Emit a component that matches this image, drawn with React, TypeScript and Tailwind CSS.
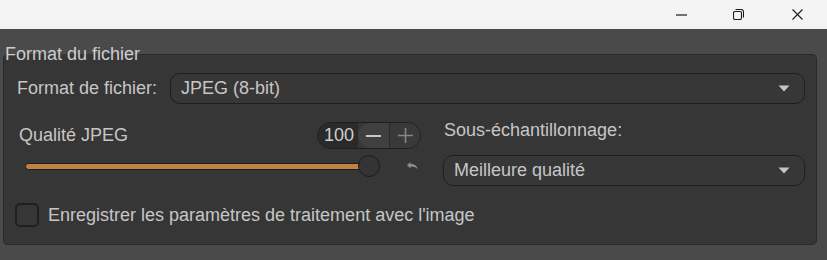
import React from "react";

function Arrow() {
  return (
    <svg width="12" height="7" viewBox="0 0 12 7">
      <path d="M0.5 0.5h11L6 6.5z" fill="#c4c4c4" />
    </svg>
  );
}

function Select({ value }: { value: string }) {
  return (
    <div className="flex h-[31px] flex-1 items-center justify-between rounded-[10px] border border-[#1f1f1f] bg-[#373737] pl-[10px] pr-[14px]">
      <span>{value}</span>
      <Arrow />
    </div>
  );
}

function TitleBar() {
  return (
    <div className="flex h-[29px] justify-end bg-[#f3f3f3]">
      <div className="flex w-[56px] items-center justify-center">
        <svg width="11" height="11" viewBox="0 0 11 11">
          <path d="M0 6h11" stroke="#1a1a1a" strokeWidth="1.2" />
        </svg>
      </div>
      <div className="flex w-[58px] items-center justify-center">
        <svg width="11" height="11" viewBox="0 0 11 11" fill="none" stroke="#1a1a1a" strokeWidth="1.1">
          <rect x="0.5" y="2.5" width="8" height="8" rx="1.5" />
          <path d="M2.5 0.5h5.5a2.5 2.5 0 0 1 2.5 2.5v5.5" />
        </svg>
      </div>
      <div className="flex w-[60px] items-center justify-center">
        <svg width="11" height="11" viewBox="0 0 11 11" stroke="#1a1a1a" strokeWidth="1.1">
          <path d="M0.5 0.5l10 10M10.5 0.5l-10 10" />
        </svg>
      </div>
    </div>
  );
}

export default function App() {
  return (
    <div className="h-[260px] w-[827px] overflow-hidden bg-[#4a4a4a] font-['Liberation_Sans',Arial,sans-serif] text-[18px] text-[#c6c6c6]">
      <TitleBar />
      <div className="pl-[3px] pr-[10px] pt-[15px]">
        <fieldset className="rounded-[5px] border border-[#2a2a2a] bg-[#363636] p-0">
          <legend className="ml-[1px] p-0 leading-[21px] text-[#cdcdcd]">Format du fichier</legend>
          <div className="pl-[13px] pr-[11px] pt-[8px] pb-[17px] leading-[21px]">
            {/* format row */}
            <div className="flex items-center">
              <div className="w-[153px]">Format de fichier:</div>
              <Select value="JPEG (8-bit)" />
            </div>

            {/* quality + subsampling */}
            <div className="mt-[16px] grid grid-cols-[404px_1fr] gap-x-[22px]">
              <div>
                <div className="flex h-[31px] items-center justify-between">
                  <span className="ml-[2px]">Qualité JPEG</span>
                  <div className="flex h-[27px] w-[104px] overflow-hidden rounded-full border border-[#1f1f1f]">
                    <div className="flex w-[40px] items-center bg-[#2a2a2a] pl-[6px] text-[#cfcfcf]">100</div>
                    <div className="flex w-[31px] items-center justify-center rounded-l-full bg-[#404040]">
                      <svg width="15" height="2" viewBox="0 0 15 2">
                        <path d="M0 1h15" stroke="#c8c8c8" strokeWidth="2" />
                      </svg>
                    </div>
                    <div className="flex flex-1 items-center justify-center border-l border-[#2a2a2a] bg-[#393939]">
                      <svg width="15" height="15" viewBox="0 0 15 15">
                        <path d="M0 7.5h15M7.5 0v15" stroke="#858585" strokeWidth="1.6" />
                      </svg>
                    </div>
                  </div>
                </div>
                <div className="mt-[4px] flex h-[22px] items-center">
                  <div className="ml-[8px] flex w-[355px] items-center">
                    <div className="h-[7px] flex-1 rounded-full border border-[#1d1d1d] bg-[#c0823f]" />
                    <div className="-ml-[12px] h-[22px] w-[22px] rounded-full border-[1.5px] border-[#1c1c1c] bg-[#343434]" />
                  </div>
                  <svg className="ml-[27px]" width="11" height="8" viewBox="0 0 11 8">
                    <path d="M0 3.2L3.6 0v2C7.5 2 10 3.8 10.8 7.6 9.4 5.4 7 4.5 3.6 4.6v2z" fill="#8e8e8e" />
                  </svg>
                </div>
              </div>
              <div>
                <div className="ml-[1px]">Sous-échantillonnage:</div>
                <div className="mt-[14px] flex">
                  <Select value="Meilleure qualité" />
                </div>
              </div>
            </div>

            {/* checkbox */}
            <div className="mt-[17px] flex items-center">
              <div className="-ml-[2px] h-[24px] w-[24px] rounded-[5px] border-2 border-[#1f1f1f] bg-[#363636]" />
              <span className="ml-[9px]">Enregistrer les paramètres de traitement avec l'image</span>
            </div>
          </div>
        </fieldset>
      </div>
    </div>
  );
}
